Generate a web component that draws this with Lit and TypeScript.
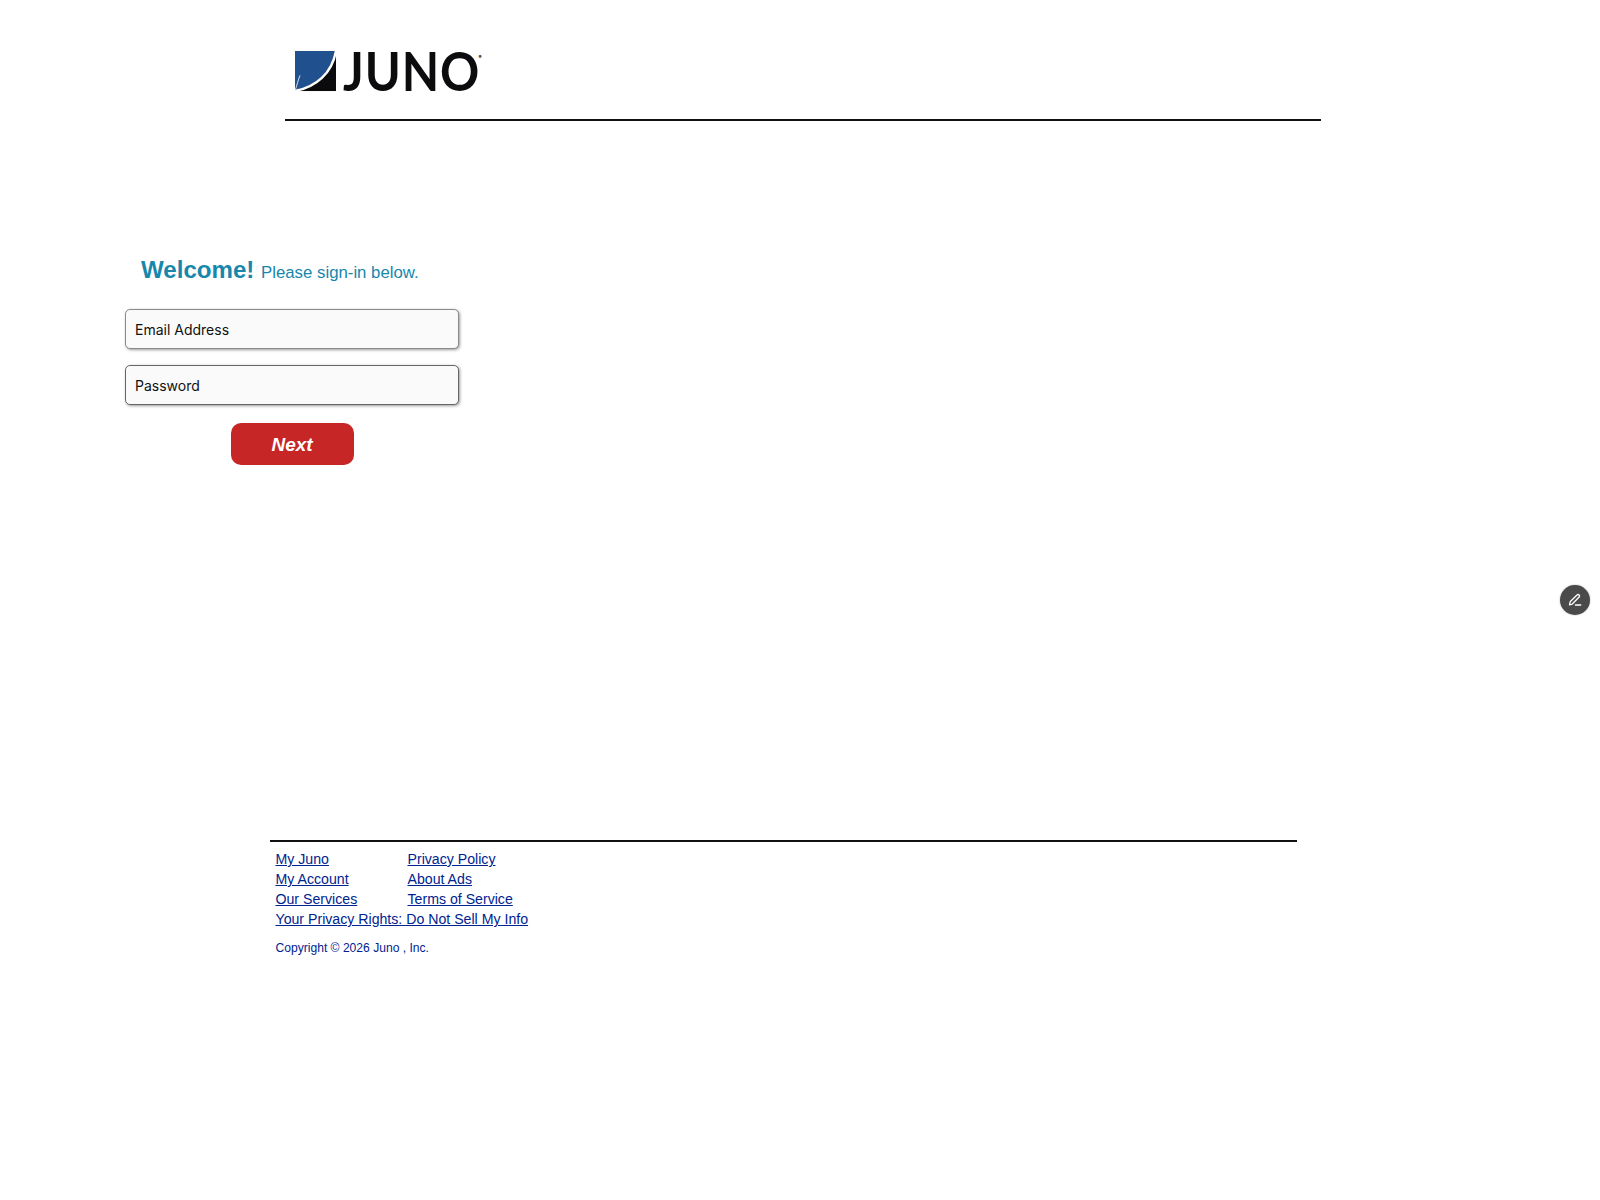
import { LitElement, html, css } from "lit";
import { customElement } from "lit/decorators.js";

@customElement("app-root")
export class AppRoot extends LitElement {
  static styles = css`
    :host {
      display: block;
      position: relative;
      height: 1200px;
      background: #fff;
      font-family: "Liberation Sans", Arial, sans-serif;
      overflow: hidden;
    }
    * { box-sizing: border-box; }
    .header {
      margin-left: 285px;
      width: 1036px;
      height: 121px;
      padding: 50px 0 0 9px;
      border-bottom: 2px solid #111;
      display: flex;
      align-items: flex-start;
      gap: 6px;
    }
    .mark { width: 43px; height: 42px; flex: none; display: block; }
    .wordmark {
      display: flex;
      align-items: flex-start;
      font-family: "Lato", sans-serif;
      font-size: 54px;
      line-height: 41px;
      height: 41px;
      letter-spacing: 1px;
      font-weight: 700;
      color: #0c0c0e;
      transform: scaleX(0.9);
      transform-origin: left top;
    }
    .reg {
      font-size: 6px;
      line-height: 6px;
      letter-spacing: 0;
      color: #555;
      margin: 3px 0 0 -2px;
    }
    .form {
      margin: 133px 0 0 125px;
      width: 334px;
      display: flex;
      flex-direction: column;
    }
    .welcome {
      margin: 0 0 0 16px;
      height: 55px;
      color: #1787ab;
      font-size: 16.8px;
      line-height: 32px;
      white-space: nowrap;
    }
    .welcome b { font-size: 24.1px; margin-right: 2px; }
    .field {
      display: block;
      width: 334px;
      height: 40px;
      margin-bottom: 16px;
      padding: 0 9px;
      background: #fafafa;
      border: 1px solid #8a8a8a;
      border-radius: 5px;
      box-shadow: 1px 1px 3px rgba(0, 0, 0, 0.4);
      font-family: "Inter", sans-serif;
      font-size: 14px;
      color: #111;
      outline: none;
    }
    .field.pw { border-color: #666; }
    .field::placeholder { color: #111; opacity: 1; }
    .next {
      align-self: center;
      width: 123px;
      height: 42px;
      margin-top: 2px;
      padding: 2px 0 0;
      border: 0;
      border-radius: 10px;
      background: #c62626;
      color: #fff;
      font-family: "Liberation Sans", Arial, sans-serif;
      font-size: 19px;
      font-weight: 700;
      font-style: italic;
    }
    .footer {
      margin: 375px 0 0 270px;
      width: 1027px;
      border-top: 2px solid #111;
      padding: 7px 0 0 5.5px;
      color: #00238f;
    }
    .links {
      display: grid;
      grid-template-columns: 132px auto;
      justify-content: start;
      font-size: 14.15px;
      line-height: 20px;
    }
    .wide { grid-column: 1 / 3; }
    a { color: #00238f; text-decoration: underline; }
    .copy { margin: 11px 0 0; font-size: 12.1px; line-height: 16px; }
    .edit {
      position: absolute;
      left: 1560px;
      top: 585px;
      width: 30px;
      height: 30px;
      border-radius: 50%;
      background: #4a4a4a;
      box-shadow: 0 0 2px rgba(0, 0, 0, 0.3);
      display: flex;
      align-items: center;
      justify-content: center;
      border: 0;
      padding: 0;
    }
  `;

  render() {
    return html`
      <header class="header">
        <svg class="mark" viewBox="0 0 43 43" preserveAspectRatio="none" aria-label="Juno logo">
          <rect x="1" y="1" width="41" height="41" fill="#0b0b0d" />
          <path d="M1 1H42C40 20 24 36 1 41Z" fill="#21508f" />
          <path d="M1 42C22 38 38 24 42 1" fill="none" stroke="#fff" stroke-width="2.4" />
          <path d="M6 26C4 31 3 36 1 42" fill="none" stroke="#d8e2ee" stroke-width="1" />
        </svg>
        <div class="wordmark">JUNO<span class="reg">●</span></div>
      </header>

      <main class="form">
        <div class="welcome"><b>Welcome!</b> Please sign-in below.</div>
        <input class="field" placeholder="Email Address" />
        <input class="field pw" type="password" placeholder="Password" />
        <button class="next">Next</button>
      </main>

      <footer class="footer">
        <div class="links">
          <a href="#">My Juno</a><a href="#">Privacy Policy</a>
          <a href="#">My Account</a><a href="#">About Ads</a>
          <a href="#">Our Services</a><a href="#">Terms of Service</a>
          <a class="wide" href="#">Your Privacy Rights: Do Not Sell My Info</a>
        </div>
        <p class="copy">Copyright © 2026 Juno , Inc.</p>
      </footer>

      <button class="edit" aria-label="Edit">
        <svg width="15" height="15" viewBox="0.6 0.6 14 14" fill="none" stroke="#fff" stroke-width="1.2" stroke-linejoin="round" stroke-linecap="round">
          <path d="M2 11.6 2.6 8.8 9 2.4a1.4 1.4 0 0 1 2 2L4.6 10.9Z" />
          <path d="M7.5 11.8H12.5" />
        </svg>
      </button>
    `;
  }
}
